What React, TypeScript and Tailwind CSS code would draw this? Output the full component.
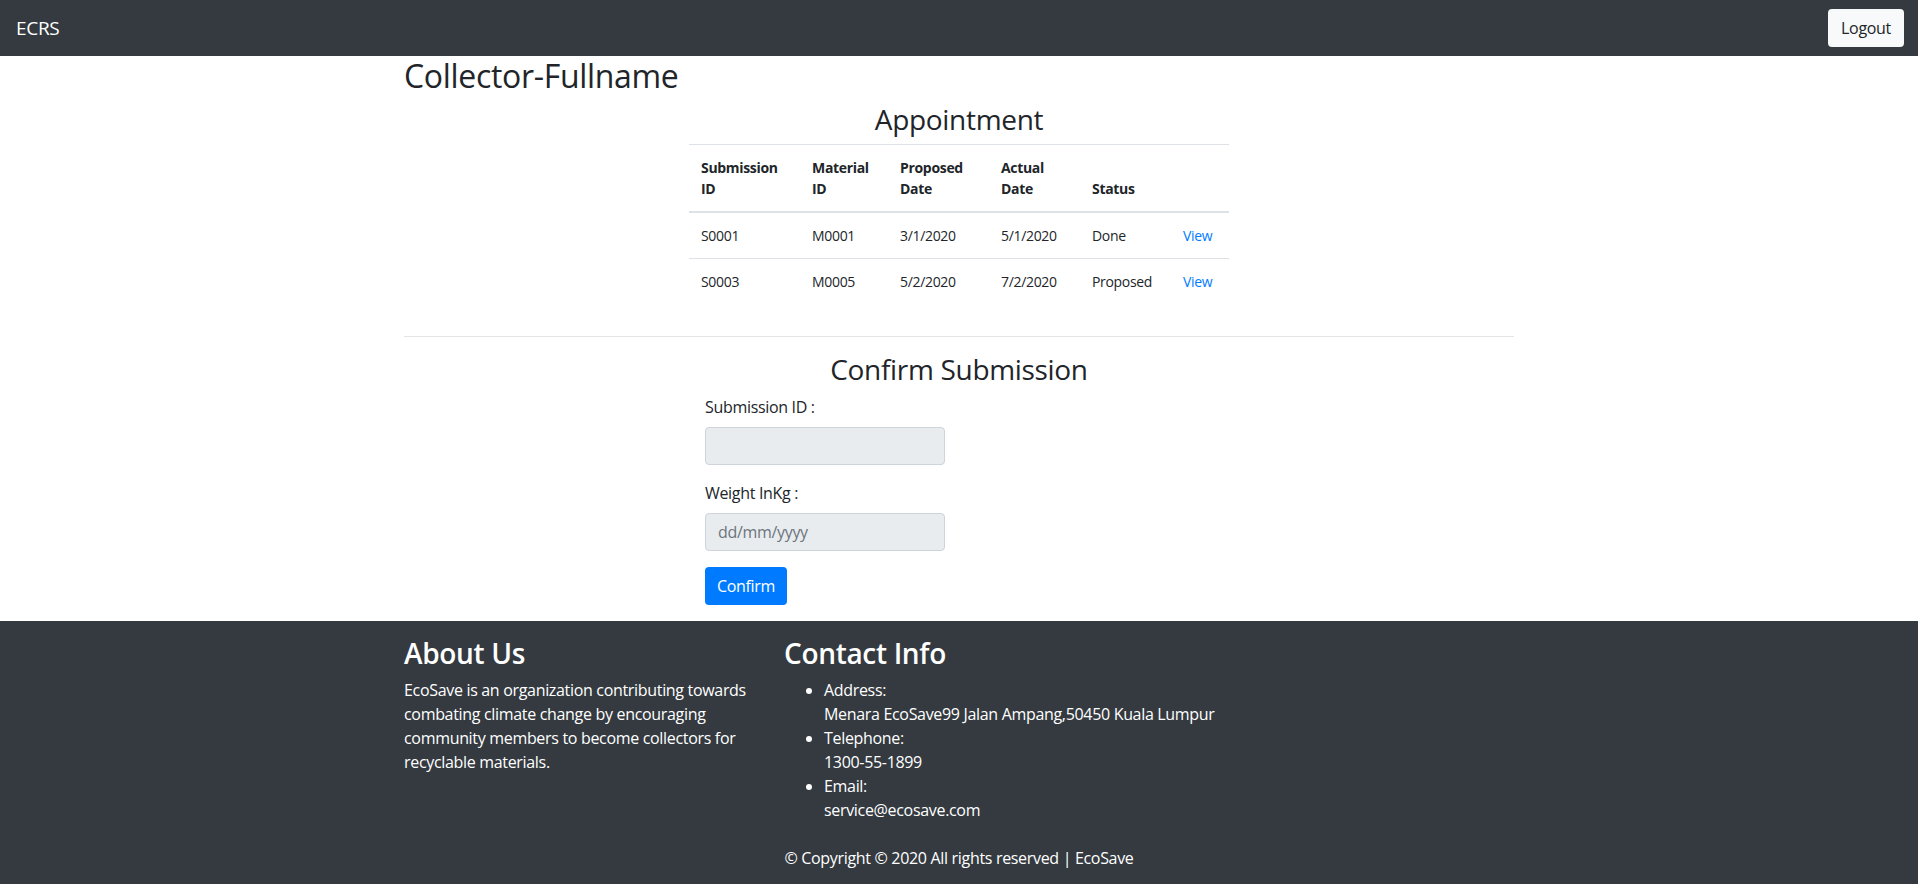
const rows = [
  { sid: 'S0001', mid: 'M0001', proposed: '3/1/2020', actual: '5/1/2020', status: 'Done' },
  { sid: 'S0003', mid: 'M0005', proposed: '5/2/2020', actual: '7/2/2020', status: 'Proposed' },
];

export default function App() {
  return (
    <div className="min-h-[884px] flex flex-col bg-white text-[#212529] font-['Open_Sans',sans-serif] tracking-[-0.02em]">
      {/* Navbar */}
      <nav className="h-14 bg-[#343a40] flex items-center justify-between pl-4 pr-[14px]">
        <span className="text-white text-[19px] leading-none">ECRS</span>
        <button className="h-[38px] w-[76px] rounded bg-[#f8f9fa] text-[#212529] text-base">
          Logout
        </button>
      </nav>

      {/* Main */}
      <main className="w-[1110px] mx-auto">
        <h2 className="text-[32px] leading-[1.2] font-medium mt-[1px] mb-2">Collector-Fullname</h2>

        <div className="w-[540px] mx-auto">
          <h3 className="text-[28px] leading-[1.2] font-medium text-center mb-[7px]">Appointment</h3>
          <table className="w-full text-sm leading-[21px] border-collapse table-fixed">
            <thead>
              <tr className="border-t border-[#dee2e6] border-b-2 align-bottom text-left">
                <th className="w-[111px] p-3 font-bold">Submission ID</th>
                <th className="w-[88px] p-3 font-bold">Material ID</th>
                <th className="w-[101px] p-3 font-bold">Proposed Date</th>
                <th className="w-[91px] p-3 font-bold">Actual Date</th>
                <th className="w-[91px] p-3 font-bold">Status</th>
                <th className="p-3"></th>
              </tr>
            </thead>
            <tbody>
              {rows.map((r, i) => (
                <tr key={r.sid} className={i === 0 ? 'border-b border-[#dee2e6]' : ''}>
                  <td className="p-3">{r.sid}</td>
                  <td className="p-3">{r.mid}</td>
                  <td className="p-3">{r.proposed}</td>
                  <td className="p-3">{r.actual}</td>
                  <td className="p-3">{r.status}</td>
                  <td className="p-3">
                    <a href="#" className="text-[#007bff]">View</a>
                  </td>
                </tr>
              ))}
            </tbody>
          </table>
        </div>

        <hr className="border-t border-black/10 mt-8 mb-4" />

        <div className="w-[540px] mx-auto">
          <h3 className="text-[28px] leading-[1.2] font-medium text-center mb-2">Confirm Submission</h3>
          <form className="pl-4 text-base leading-6" onSubmit={(e) => e.preventDefault()}>
            <div className="mb-4">
              <label className="block mb-2">Submission ID :</label>
              <input
                readOnly
                className="block w-[240px] h-[38px] px-3 bg-[#e9ecef] border border-[#ced4da] rounded outline-none"
              />
            </div>
            <div className="mb-4">
              <label className="block mb-2">Weight InKg :</label>
              <input
                readOnly
                placeholder="dd/mm/yyyy"
                className="block w-[240px] h-[38px] px-3 bg-[#e9ecef] border border-[#ced4da] rounded outline-none placeholder:text-[#6c757d]"
              />
            </div>
            <button className="h-[38px] px-3 rounded bg-[#007bff] text-white mb-4">Confirm</button>
          </form>
        </div>
      </main>

      {/* Footer */}
      <footer className="flex-1 bg-[#343a40] text-white pt-4 text-base leading-6">
        <div className="w-[1110px] mx-auto">
          <div className="grid grid-cols-[350px_1fr] gap-[30px]">
            <div>
              <h3 className="text-[28px] leading-[1.2] font-semibold mb-2">About Us</h3>
              <p>
                EcoSave is an organization contributing towards
                <br />
                combating climate change by encouraging
                <br />
                community members to become collectors for
                <br />
                recyclable materials.
              </p>
            </div>
            <div>
              <h3 className="text-[28px] leading-[1.2] font-semibold mb-2">Contact Info</h3>
              <ul className="list-disc pl-10 mb-4">
                <li>
                  Address:
                  <br />
                  Menara EcoSave99 Jalan Ampang,50450 Kuala Lumpur
                </li>
                <li>
                  Telephone:
                  <br />
                  1300-55-1899
                </li>
                <li>
                  Email:
                  <br />
                  service@ecosave.com
                </li>
              </ul>
            </div>
          </div>
          <p className="text-center mt-2 pb-4">© Copyright © 2020 All rights reserved | EcoSave</p>
        </div>
      </footer>
    </div>
  );
}
